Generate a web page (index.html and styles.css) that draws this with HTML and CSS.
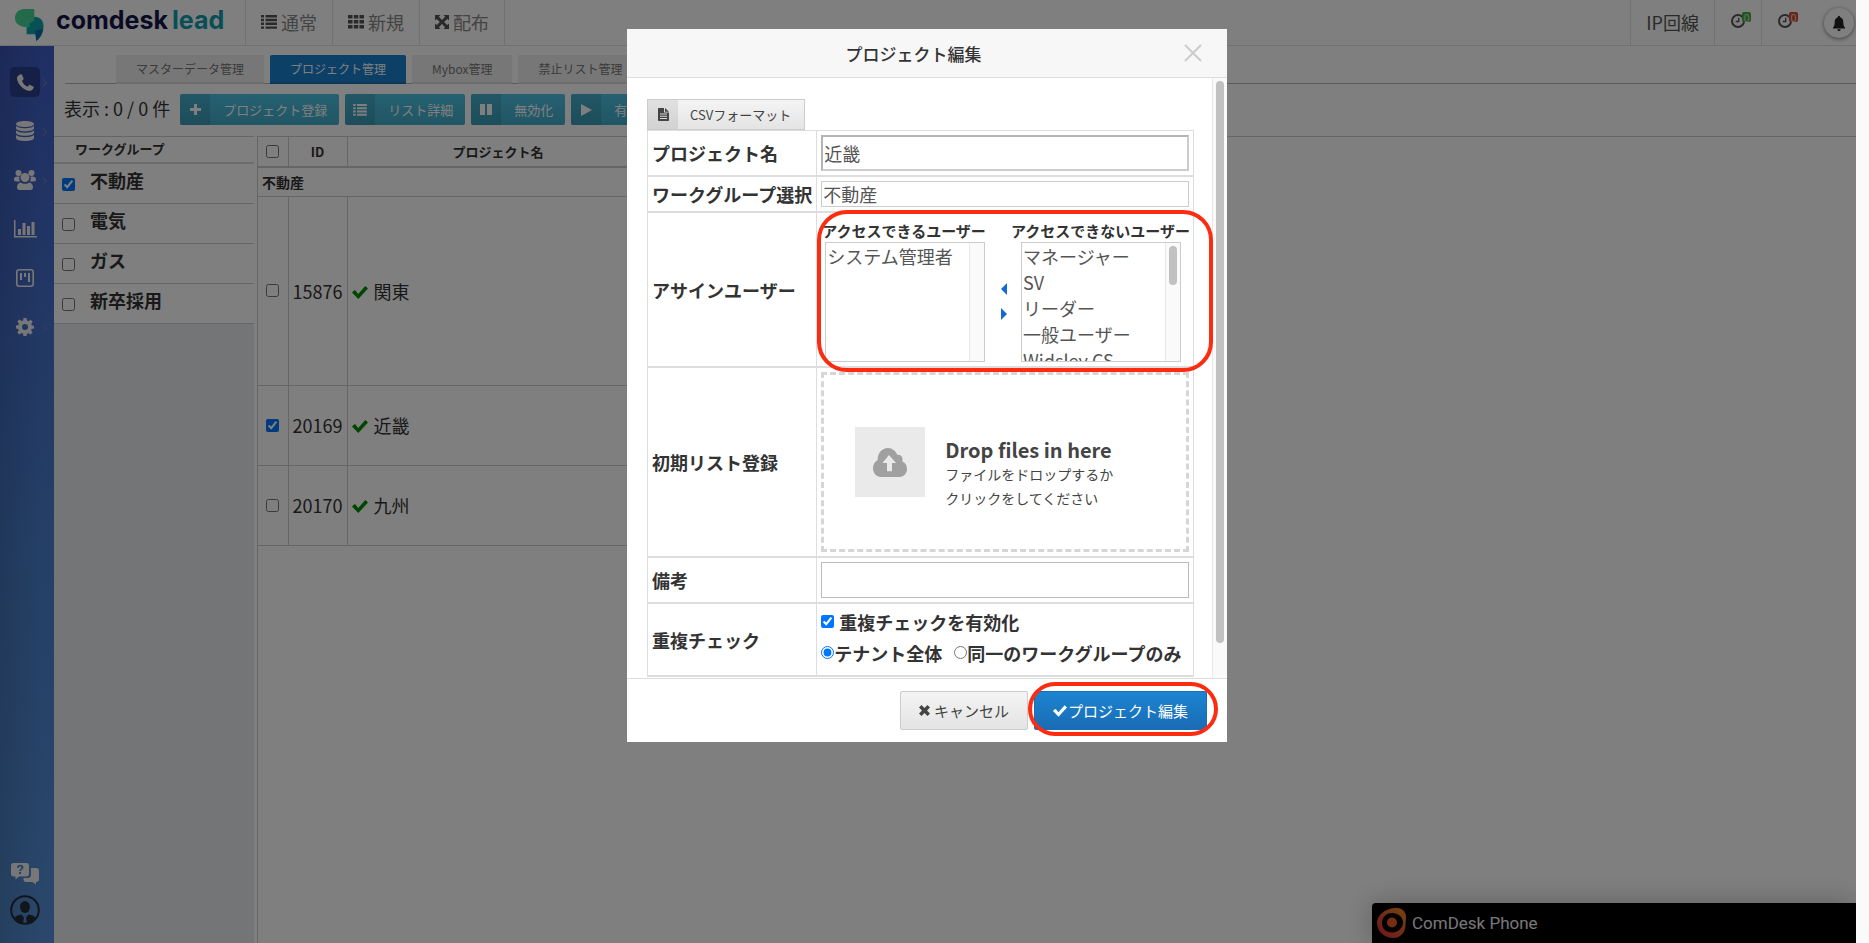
FILE: index.html
```html
<!DOCTYPE html>
<html lang="ja">
<head>
  <meta charset="UTF-8">
  <meta name="viewport" content="width=device-width, initial-scale=1">
  <title>プロジェクト管理 | comdesk lead</title>
  <link rel="stylesheet" href="styles.css">
</head>
<body>

<!-- アイコン定義 -->
<svg class="defs" width="0" height="0" aria-hidden="true">
  <symbol id="i-list" viewBox="0 0 16 14"><path d="M0 0h3v2.4H0zM4.500 0H16v2.400H4.500zM0 3.800h3v2.400H0zM4.500 3.800H16v2.400H4.500zM0 7.600h3V10H0zM4.500 7.600H16V10H4.500zM0 11.400h3v2.400H0zM4.500 11.400H16v2.400H4.500z"/></symbol>
  <symbol id="i-grid" viewBox="0 0 16 14"><path d="M0 0h4.500v3.600H0zM5.800 0h4.500v3.600H5.800zM11.500 0H16v3.600h-4.500zM0 5h4.500v3.600H0zM5.800 5h4.500v3.600H5.800zM11.500 5H16v3.600h-4.500zM0 10h4.500v3.600H0zM5.800 10h4.500v3.600H5.800zM11.500 10H16v3.600h-4.500z"/></symbol>
  <symbol id="i-expand" viewBox="0 0 14 14"><path d="M0 0h5.500L3.900 1.700 7 4.900l3.100-3.200L8.500 0H14v5.500l-1.700-1.600L9.100 7l3.200 3.100L14 8.500V14H8.500l1.600-1.700L7 9.100l-3.100 3.200L5.500 14H0V8.500l1.700 1.600L4.900 7 1.700 3.900 0 5.500z"/></symbol>
  <symbol id="i-check" viewBox="0 0 16 13"><path d="M1.200 5.200 0 6.600 6.300 13 16 2.600 13.300 0 6.200 7.900 3.100 4.100z"/></symbol>
  <symbol id="i-clock" viewBox="0 0 14 14"><path fill-rule="evenodd" d="M7 0a7 7 0 1 0 0 14A7 7 0 0 0 7 0zm0 2a5 5 0 1 1 0 10A5 5 0 0 1 7 2zm0 1.800v3H4.700v1.400h3.700V3.800z"/></symbol>
</svg>

<div class="app">
  <header class="topbar">
    <a class="brand" href="#" aria-label="comdesk lead">
      <svg class="brand-mark" viewBox="0 0 30 33">
        <path fill="#0fa3a8" d="M20 8c6 0 9.500 4 9.500 9.500 0 7-3 12.500-7.500 15.500-.5-3-.5-5-1-7h-9V17z"/>
        <path fill="#0a6fa8" d="M21 22l8-1c-1 5-3.500 9.500-7 12z"/>
        <path fill="#44d492" d="M10 0h10v10c0 3-3 4-5 4.500V19C5 19 0 15 0 9.500S4 0 10 0z"/>
      </svg>
      <span class="brand-name">comdesk</span><span class="brand-sub">lead</span>
    </a>
    <nav class="topnav">
      <a href="#"><svg class="ico-nav" width="16" height="14"><use href="#i-list"/></svg>通常</a>
      <a href="#"><svg class="ico-nav" width="16" height="14"><use href="#i-grid"/></svg>新規</a>
      <a href="#"><svg class="ico-nav" width="14" height="14"><use href="#i-expand"/></svg>配布</a>
    </nav>
    <div class="topbar-right">
      <a class="line-type" href="#">IP回線</a>
      <a class="alarm" href="#"><svg class="ico-clock"><use href="#i-clock"/></svg><span class="badge green">0</span></a>
      <a class="alarm" href="#"><svg class="ico-clock"><use href="#i-clock"/></svg><span class="badge red">0</span></a>
      <button class="bell" type="button" aria-label="通知">
        <svg width="12" height="15" viewBox="0 0 12 15"><path d="M6 0c.7 0 1.200.5 1.200 1.200C9.300 1.800 10.300 3.500 10.300 6c0 3 .6 4.600 1.700 5.600V12.500H0v-.9C1.100 10.600 1.700 9 1.700 6c0-2.500 1-4.200 3.100-4.800C4.800.5 5.300 0 6 0zM4.300 13.200h3.400C7.600 14.200 7 15 6 15s-1.600-.8-1.700-1.800z"/></svg>
      </button>
    </div>
  </header>

  <aside class="sidebar">
    <a class="side-item more active" href="#" aria-label="電話"><svg width="17" height="17" viewBox="0 0 17 17"><path d="M3.600.2c-2.600.9-4 2.800-3.500 5 1 5 5.600 9.800 10.900 11.500 2.300.6 4.600-.5 5.600-2.800.2-.6.100-1-.4-1.300l-3-1.600c-.5-.3-1-.2-1.300.2l-1.300 1.500C7.900 11.500 6 9.400 5 6.900l1.300-1.400c.3-.4.4-.8.200-1.300L5 .8C4.700.2 4.200 0 3.600.2z"/></svg></a>
    <a class="side-item more" href="#" aria-label="データ"><svg width="18" height="20" viewBox="0 0 18 20"><path d="M9 0c5 0 9 1.300 9 3s-4 3-9 3-9-1.300-9-3 4-3 9-3zM0 5c2 1.500 5 2.200 9 2.200S16 6.500 18 5v2.300c0 1.700-4 3-9 3s-9-1.300-9-3zM0 9.500c2 1.500 5 2.200 9 2.200s7-.7 9-2.200v2.300c0 1.700-4 3-9 3s-9-1.300-9-3zM0 14c2 1.500 5 2.200 9 2.200s7-.7 9-2.200v3c0 1.700-4 3-9 3s-9-1.300-9-3z"/></svg></a>
    <a class="side-item more" href="#" aria-label="ユーザー"><svg width="22" height="20" viewBox="0 0 22 20"><circle cx="4.500" cy="3" r="3"/><circle cx="17.500" cy="3" r="3"/><path d="M0 9.500C0 7 1.500 6 5.500 6.500a6 6 0 0 0 .5 5H2C.7 11.500 0 10.800 0 9.500zM22 9.500c0-2.500-1.500-3.500-5.500-3a6 6 0 0 1-.5 5h4c1.300 0 2-.7 2-2zM6.500 12.500c2.500 1.700 6.500 1.700 9 0 2.500.5 3.500 2.500 3.500 5 0 1.500-1 2.500-2.500 2.500h-11C4 20 3 19 3 17.500c0-2.500 1-4.500 3.500-5z"/><circle cx="11" cy="7.500" r="4.500"/></svg></a>
    <a class="side-item" href="#" aria-label="統計"><svg width="23" height="18" viewBox="0 0 23 18"><path d="M0 0h1.500v16H23v1.500H0zM4 9h3v6H4zM8.500 3h3v12h-3zM13 6h3v9h-3zM17.500 2h3v13h-3z"/></svg></a>
    <a class="side-item" href="#" aria-label="ボード"><svg width="18" height="18" viewBox="0 0 18 18"><path fill-rule="evenodd" d="M3 0h12a3 3 0 0 1 3 3v12a3 3 0 0 1-3 3H3a3 3 0 0 1-3-3V3a3 3 0 0 1 3-3zm0 1.600C2.200 1.600 1.600 2.200 1.600 3v12c0 .8.600 1.400 1.400 1.400h12c.8 0 1.400-.6 1.400-1.400V3c0-.8-.6-1.400-1.400-1.400zM4 4h2v7H4zM8 4h2v4H8zM12 4h2v9h-2z"/></svg></a>
    <a class="side-item more" href="#" aria-label="設定"><svg width="18" height="18" viewBox="0 0 18 18"><path fill-rule="evenodd" d="M7.500 0h3l.5 2.500 1.600.7L14.700 1.700l2 2-1.400 2.200.6 1.500L18 7.700v2.900l-2.300.4-.6 1.500 1.500 2.100-2 2-2.200-1.400-1.500.6-.4 2.200H7.500L7 15.700l-1.500-.6-2.200 1.500-2-2 1.500-2.200-.6-1.500L0 10.400V7.600L2.300 7.200l.6-1.500L1.400 3.600l2-2 2.200 1.500L7.100 2.500zM9 6a3 3 0 1 0 0 6 3 3 0 0 0 0-6z"/></svg></a>
    <div class="side-bottom">
      <a class="side-help" href="#" aria-label="ヘルプ"><svg width="28" height="22" viewBox="0 0 28 22"><path d="M20 5h5.500C27 5 28 6 28 7.500v9c0 1.500-1 2.500-2.500 2.500H25v2.500L21.500 19H15c-1.500 0-2.500-1-2.500-2.500V15H17c2 0 3-1.500 3-3z"/><path fill-rule="evenodd" d="M2.500 0h13C17 0 18 1 18 2.500V11c0 1.500-1 2.500-2.500 2.500H8L4.500 16.500v-3h-2C1 13.500 0 12.500 0 11V2.500C0 1 1 0 2.500 0zM6 4.700h2c0-1 .5-1.300 1.200-1.300.8 0 1.200.4 1.200 1 0 1.200-2.200 1.300-2.200 3.600h1.900c0-1.500 2.400-1.700 2.400-3.800 0-1.500-1.300-2.500-3.200-2.500C7.300 1.700 6 2.800 6 4.700zM8.100 9h2v2h-2z"/></svg></a>
      <a class="side-user" href="#" aria-label="アカウント"><svg width="30" height="30" viewBox="0 0 30 30"><circle cx="15" cy="15" r="13.800" fill="none" stroke="currentColor" stroke-width="2"/><ellipse cx="15" cy="12" rx="5" ry="6"/><path d="M4 24c1-3 4-4 7.500-4.500l2.500 3-1 6C9 28.500 6 26.500 4 24zM26 24c-1-3-4-4-7.500-4.500l-2.500 3 1 6c4 0 7-2 9-4.500z"/></svg></a>
    </div>
  </aside>

  <main class="content">
    <div class="tabs">
      <a class="tab" href="#">マスターデータ管理</a>
      <a class="tab active" href="#">プロジェクト管理</a>
      <a class="tab" href="#">Mybox管理</a>
      <a class="tab" href="#">禁止リスト管理</a>
    </div>

    <div class="toolbar">
      <span class="count">表示 : 0 / 0 件</span>
      <button class="tool-btn" type="button"><span class="tool-ico"><svg width="11" height="11" viewBox="0 0 11 11"><path d="M4 0h3v4h4v3H7v4H4V7H0V4h4z"/></svg></span>プロジェクト登録</button>
      <button class="tool-btn" type="button"><span class="tool-ico"><svg width="14" height="12"><use href="#i-list"/></svg></span>リスト詳細</button>
      <button class="tool-btn" type="button"><span class="tool-ico"><svg width="12" height="11" viewBox="0 0 12 11"><path d="M0 0h5v11H0zM7 0h5v11H7z"/></svg></span>無効化</button>
      <button class="tool-btn" type="button"><span class="tool-ico"><svg width="11" height="12" viewBox="0 0 11 12"><path d="M0 0l11 6-11 6z"/></svg></span>有効化</button>
    </div>

    <div class="panes">
      <section class="groups">
        <h2>ワークグループ</h2>
        <label><input type="checkbox" checked>不動産</label>
        <label><input type="checkbox">電気</label>
        <label><input type="checkbox">ガス</label>
        <label><input type="checkbox">新卒採用</label>
      </section>

      <section class="projects">
        <table class="project-table">
          <thead>
            <tr><th class="col-check"><input type="checkbox" aria-label="すべて選択"></th><th class="col-id">ID</th><th class="col-name">プロジェクト名</th></tr>
          </thead>
          <tbody>
            <tr class="group-row"><th colspan="3">不動産</th></tr>
            <tr class="tall"><td class="col-check"><input type="checkbox" aria-label="関東"></td><td>15876</td><td><svg class="ico-ok"><use href="#i-check"/></svg>関東</td></tr>
            <tr><td class="col-check"><input type="checkbox" aria-label="近畿" checked></td><td>20169</td><td><svg class="ico-ok"><use href="#i-check"/></svg>近畿</td></tr>
            <tr><td class="col-check"><input type="checkbox" aria-label="九州"></td><td>20170</td><td><svg class="ico-ok"><use href="#i-check"/></svg>九州</td></tr>
          </tbody>
        </table>
      </section>
    </div>
  </main>

  <div class="phone">
    <svg width="30" height="30" viewBox="0 0 30 30">
      <defs><linearGradient id="ring" x1="1" y1="0" x2="0" y2="1"><stop offset="0" stop-color="#f08a1c"/><stop offset="1" stop-color="#d8283c"/></linearGradient></defs>
      <path fill="url(#ring)" fill-rule="evenodd" d="M17 0c7-1 12 3 12 9 0 3-.5 5-.5 8 0 7-5 13-12 13C8 30 0 24 0 15 0 7 8 1 17 0zm-2 5C9 5 5 9.500 5 15s4 9.500 10 9.500S26 20 26 14.500 21 5 15 5z"/>
      <circle cx="15" cy="14.500" r="5" fill="#ec5a28"/>
    </svg>
    <span>ComDesk Phone</span>
  </div>
</div>

<div class="overlay">
  <div class="modal" role="dialog" aria-labelledby="modalTitle">
    <div class="modal-header">
      <h1 id="modalTitle">プロジェクト編集</h1>
      <button class="close" type="button" aria-label="閉じる"><svg width="18" height="18" viewBox="0 0 18 18"><path d="M1 1l16 16M17 1L1 17"/></svg></button>
    </div>

    <div class="modal-scroll">
      <div class="modal-body">
        <button class="csv-btn" type="button"><span class="csv-ico"><svg width="11" height="13" viewBox="0 0 11 13"><path fill-rule="evenodd" d="M1 0h5v4.500h5V12c0 .600-.4 1-1 1H1c-.6 0-1-.4-1-1V1c0-.6.4-1 1-1zm6 0l4 3.700H7zM2 5.500v1h7v-1zm0 2.200v1h7v-1zm0 2.200v1h7v-1z"/></svg></span>CSVフォーマット</button>

        <table class="form-table">
          <tr>
            <th><label for="projectName">プロジェクト名</label></th>
            <td><input class="text-input focused" id="projectName" type="text" value="近畿"></td>
          </tr>
          <tr>
            <th><label for="workGroup">ワークグループ選択</label></th>
            <td><select class="group-select" id="workGroup"><option>不動産</option></select></td>
          </tr>
          <tr>
            <th>アサインユーザー</th>
            <td class="assign-cell">
              <div class="assign">
                <div class="assign-col">
                  <label for="allowed">アクセスできるユーザー</label>
                  <div class="list-box">
                    <select id="allowed" multiple>
                      <option>システム管理者</option>
                    </select>
                    <div class="track"></div>
                  </div>
                </div>
                <div class="assign-arrows">
                  <button type="button" aria-label="追加"><svg width="6" height="12" viewBox="0 0 6 12"><path d="M6 0v12L0 6z"/></svg></button>
                  <button type="button" aria-label="削除"><svg width="6" height="12" viewBox="0 0 6 12"><path d="M0 0v12l6-6z"/></svg></button>
                </div>
                <div class="assign-col denied">
                  <label for="denied">アクセスできないユーザー</label>
                  <div class="list-box">
                    <select id="denied" multiple>
                      <option>マネージャー</option>
                      <option>SV</option>
                      <option>リーダー</option>
                      <option>一般ユーザー</option>
                      <option>Widsley CS</option>
                    </select>
                    <div class="track"><div class="thumb thumb-list"></div></div>
                  </div>
                </div>
              </div>
              <div class="mark mark-assign"></div>
            </td>
          </tr>
          <tr>
            <th>初期リスト登録</th>
            <td>
              <div class="dropzone">
                <div class="drop-ico"><svg width="34" height="29" viewBox="0 0 34 25" preserveAspectRatio="none"><path fill-rule="evenodd" d="M8 25c-4.500 0-8-3.300-8-7.500 0-3.200 1.800-5.800 4.600-7C4.500 4.500 9 0 15 0c4.300 0 7.800 2.500 9.300 6 3.700-.7 6.200 2.400 5 5.700 2.900.8 4.700 3.200 4.700 6.200 0 4-3.200 7.100-7.200 7.100zM16 6l-6.500 7H14v7h5v-7h4z"/></svg></div>
                <div class="drop-text">
                  <strong>Drop files in here</strong>
                  <span>ファイルをドロップするか<br>クリックをしてください</span>
                </div>
              </div>
            </td>
          </tr>
          <tr>
            <th><label for="note">備考</label></th>
            <td><input class="text-input" id="note" type="text"></td>
          </tr>
          <tr>
            <th>重複チェック</th>
            <td class="dup">
              <div class="dup-row"><label class="spaced"><input type="checkbox" checked>重複チェックを有効化</label></div>
              <div class="dup-row"><label><input type="radio" name="scope" checked>テナント全体</label><label><input type="radio" name="scope">同一のワークグループのみ</label></div>
            </td>
          </tr>
        </table>
      </div>
      <div class="track"><div class="thumb thumb-modal"></div></div>
    </div>

    <div class="modal-footer">
      <button class="btn" type="button"><svg width="11" height="11" viewBox="0 0 11 11"><path d="M2.500 0L5.500 3l3-3L11 2.500l-3 3 3 3L8.500 11l-3-3-3 3L0 8.500l3-3-3-3z"/></svg>キャンセル</button>
      <div class="submit-wrap">
        <button class="btn primary" type="button"><svg width="14" height="12"><use href="#i-check"/></svg>プロジェクト編集</button>
        <div class="mark mark-submit"></div>
      </div>
    </div>
  </div>
</div>

</body>
</html>
```

FILE: styles.css
```css
* {
  box-sizing: border-box;
}

body {
  font-family: "Noto Sans CJK JP", "Noto Sans", sans-serif;
  font-size: 18px;
  color: #333;
  background-color: #fafafa;
  margin: 0;
  overflow: hidden;
}

a {
  color: inherit;
  text-decoration: none;
}

button, input, select {
  font-family: inherit;
}

svg {
  fill: currentColor;
  flex: none;
}

.defs {
  position: absolute;
}

input[type="checkbox"], input[type="radio"] {
  width: 13px;
  height: 13px;
  margin: 0;
  flex: none;
}

.app {
  display: grid;
  grid-template: 46px 1fr / 54px 1fr;
  height: 100vh;
  margin-right: 13px;
  background-color: #fff;
  position: relative;
  overflow: hidden;
}

/* ヘッダー */
.topbar {
  grid-column: 1 / 3;
  display: flex;
  border-bottom: 1px solid #e0e0e0;
}

.brand {
  display: flex;
  align-items: flex-start;
  width: 246px;
  padding-left: 15px;
  border-right: 1px solid #e4e4e4;
  font-family: Inter, sans-serif;
  font-size: 25px;
  font-weight: 700;
  line-height: 40px;
}

.brand-mark {
  width: 29px;
  height: 32px;
  margin: 9px 12px 0 0;
}

.brand-name {
  color: #15154a;
}

.brand-sub {
  color: #0e9cae;
  margin-left: 4px;
}

.topnav {
  display: flex;
}

.topnav a {
  display: flex;
  align-items: center;
  padding: 0 15px 2px;
  border-right: 1px solid #e4e4e4;
  color: #888;
}

.ico-nav {
  margin-right: 4px;
  color: #555;
}

.topbar-right {
  display: flex;
  margin-left: auto;
  color: #555;
}

.line-type, .alarm {
  display: flex;
  align-items: center;
  border-left: 1px solid #e4e4e4;
}

.line-type {
  padding: 0 15px 2px;
}

.alarm {
  position: relative;
  width: 47px;
  padding: 0 0 3px 16px;
}

.ico-clock {
  width: 14px;
  height: 14px;
}

.badge {
  position: absolute;
  left: 27px;
  top: 12px;
  width: 9px;
  height: 10px;
  border-radius: 2px;
  color: #ddd;
  font-size: 11px;
  line-height: 10px;
  text-align: center;
}

.badge.green {
  background-color: #3fae3f;
}

.badge.red {
  background-color: #d9482f;
}

.bell {
  display: flex;
  align-items: center;
  justify-content: center;
  width: 30px;
  height: 30px;
  margin: 8px 2px 0 16px;
  padding: 0;
  border: none;
  border-radius: 50%;
  background-color: #fff;
  box-shadow: 0 1px 4px rgba(0,0,0,0.5);
  color: #222;
}

/* サイドバー */
.sidebar {
  display: flex;
  flex-direction: column;
  align-items: center;
  padding: 21px 4px 18px 0;
  background: linear-gradient(90deg, rgba(0,0,0,0.12), rgba(0,0,0,0) 80%), linear-gradient(#3f5ec8, #4a7fcc 55%, #5590d8);
  color: #eee;
}

.side-item {
  position: relative;
  display: flex;
  align-items: center;
  justify-content: center;
  width: 30px;
  height: 30px;
  margin-bottom: 19px;
  border-radius: 5px;
}

.side-item.active {
  background-color: #2c3f8a;
}

.side-item.more::after {
  content: "";
  position: absolute;
  right: -6px;
  top: 13px;
  width: 5px;
  height: 5px;
  border: solid #6a7cb4;
  border-width: 1px 1px 0 0;
  transform: rotate(45deg);
}

.side-bottom {
  margin-top: auto;
  display: flex;
  flex-direction: column;
  align-items: center;
  gap: 10px;
}

.side-help, .side-user {
  display: flex;
}

.side-user {
  color: #222c38;
}

/* コンテンツ */
.content {
  display: flex;
  flex-direction: column;
  min-width: 0;
}

.tabs {
  display: flex;
  gap: 6px;
  margin-left: 11px;
  padding: 9px 0 0 51px;
  box-shadow: inset 0 -1px #b8b8b8;
}

.tab {
  padding: 0 20px;
  background-color: #eee;
  border-bottom: 2px solid #ddd;
  font-size: 12px;
  line-height: 27px;
  color: #777;
}

.tab.active {
  background-color: #1a80cf;
  border-color: #1a6cae;
  border-radius: 2px 2px 0 0;
  color: #fff;
}

.toolbar {
  display: flex;
  align-items: center;
  gap: 6px;
  padding: 10px 0 11px 10px;
}

.count {
  margin-right: 4px;
  padding-bottom: 4px;
}

.tool-btn {
  display: flex;
  align-items: center;
  height: 31px;
  padding: 0 12px 0 0;
  border: none;
  border-radius: 2px;
  background: linear-gradient(#4cc2e2, #42abc9);
  color: #fff;
  font-size: 13px;
}

.tool-ico {
  display: flex;
  align-items: center;
  justify-content: center;
  width: 30px;
  height: 31px;
  margin-right: 13px;
  background-color: rgba(0,0,0,0.1);
}

.panes {
  display: flex;
  flex: 1;
}

.groups {
  width: 200px;
  background-color: #e6eaed;
  border-top: 1px solid #ccc;
}

.groups h2 {
  margin: 0;
  padding: 0 0 2px 21px;
  border-bottom: 2px solid #d8d8d8;
  background-color: #fff;
  font-size: 13px;
  line-height: 23px;
}

.groups label {
  display: flex;
  align-items: center;
  height: 40px;
  padding: 0 8px 7px;
  border-bottom: 1px solid #ccc;
  background-color: #fff;
  font-weight: 700;
}

.groups input {
  margin: 8px 15px 0 0;
}

.projects {
  flex: 1;
  margin-left: 3px;
  border-top: 1px solid #ccc;
  border-left: 1px solid #ccc;
}

.project-table {
  border-collapse: collapse;
}

.project-table th, .project-table td {
  padding: 0 4px;
  border: 1px solid #ccc;
  text-align: left;
}

.project-table tr > :first-child {
  border-left: none;
}

.project-table thead th {
  height: 30px;
  border-top: none;
  border-bottom: 2px solid #ccc;
  font-size: 13px;
  text-align: center;
}

.project-table .col-check {
  width: 30px;
  text-align: center;
}

.col-check input {
  display: block;
  margin: 0 auto;
}

.col-id {
  width: 59px;
}

.col-name {
  width: 302px;
}

.project-table .group-row th {
  height: 29px;
  font-size: 14px;
}

.project-table td {
  height: 80px;
}

.project-table .tall td {
  height: 189px;
}

.ico-ok {
  width: 16px;
  height: 13px;
  margin-right: 6px;
  color: #008a00;
}

/* 電話ウィジェット */
.phone {
  position: absolute;
  right: 0;
  bottom: 0;
  display: flex;
  align-items: center;
  gap: 5px;
  width: 484px;
  height: 40px;
  padding-left: 5px;
  border-radius: 4px 0 0 0;
  background-color: #000;
  box-shadow: 0 0 28px rgba(0,0,0,0.25);
  color: #eee;
  font-family: Roboto, sans-serif;
  font-size: 17px;
}

/* モーダル */
.overlay {
  position: fixed;
  inset: 0 13px 0 0;
  padding-right: 2px;
  background-color: rgba(0,0,0,0.5);
}

.modal {
  width: 600px;
  margin: 29px auto 0;
  background-color: #fff;
}

.modal-header {
  display: flex;
  align-items: center;
  height: 49px;
  padding: 0 25px 0 16px;
  border-bottom: 1px solid #ddd;
  background-color: #f7f7f7;
}

.modal-header h1 {
  flex: 1;
  margin: 0;
  font-size: 17px;
  font-weight: 500;
  text-align: center;
}

.close {
  display: flex;
  padding: 0;
  border: none;
  background: none;
}

.close path {
  stroke: #ccc;
  stroke-width: 2;
}

.modal-scroll {
  display: flex;
  height: 600px;
  overflow: hidden;
}

.modal-body {
  flex: 1;
  padding: 21px 18px 0 20px;
}

.track {
  width: 15px;
  padding: 3px 3px 0;
  border-left: 1px solid #e8e8e8;
  background-color: #fafafa;
}

.thumb {
  width: 8px;
  border-radius: 4px;
  background-color: #c1c1c1;
}

.thumb-modal {
  height: 562px;
}

.thumb-list {
  height: 39px;
}

.csv-btn {
  display: flex;
  align-items: center;
  height: 31px;
  padding: 0 13px 0 0;
  border: 1px solid #ccc;
  background: linear-gradient(#f4f4f4, #e4e4e4);
  color: #444;
  font-size: 13px;
}

.csv-ico {
  display: flex;
  align-items: center;
  justify-content: center;
  width: 30px;
  height: 29px;
  margin-right: 12px;
  background-color: rgba(0,0,0,0.08);
}

.form-table {
  width: 100%;
  border: 1px solid #ddd;
  border-collapse: collapse;
}

.form-table th, .form-table td {
  padding: 4px;
  border: 1px solid #ddd;
  border-bottom-width: 2px;
}

.form-table th {
  width: 169px;
  text-align: left;
  white-space: nowrap;
}

.text-input {
  display: block;
  width: 100%;
  height: 36px;
  padding: 0 2px;
  border: 1px solid #bbb;
  color: #555;
  font-size: 18px;
}

.text-input.focused {
  border-width: 2px;
  border-color: #b4b4b4 #ccc #ccc #b4b4b4;
  padding: 0 1px;
}

.group-select {
  display: block;
  appearance: none;
  width: 100%;
  height: 26px;
  padding: 0 1px;
  border: 1px solid #ccc;
  background-color: #fff;
  color: #555;
  font-size: 18px;
  line-height: 24px;
}

.form-table .assign-cell {
  position: relative;
  padding: 6px 0 4px 5px;
}

.assign {
  display: flex;
  justify-content: space-between;
  padding-right: 3px;
}

.assign-col label {
  display: block;
  font-size: 15px;
  font-weight: 700;
  line-height: 23px;
}

.list-box {
  display: flex;
  width: 160px;
  height: 120px;
  margin-left: 3px;
  border: 1px solid #ccc;
}

.denied .list-box {
  margin-left: 10px;
}

.list-box select {
  flex: 1;
  min-width: 0;
  padding: 0;
  border: none;
  background-color: #fff;
  color: #555;
  font-size: 18px;
}

.list-box option {
  height: 26px;
  padding: 0 1px;
  line-height: 26px;
}

.assign-arrows {
  display: flex;
  flex-direction: column;
  gap: 13px;
  padding: 64px 0 0 11px;
}

.assign-arrows button {
  display: flex;
  padding: 0;
  border: none;
  background: none;
  color: #1769d2;
}

.dropzone {
  display: flex;
  align-items: center;
  gap: 20px;
  height: 180px;
  padding-left: 31px;
  border: 3px dashed #d6d6d6;
}

.drop-ico {
  display: flex;
  align-items: center;
  justify-content: center;
  width: 70px;
  height: 70px;
  background-color: #eaeaea;
  color: #a0a0a0;
}

.drop-text {
  padding-top: 24px;
  color: #444;
  font-size: 14px;
  line-height: 24px;
}

.drop-text strong {
  display: block;
  font-size: 20px;
}

.form-table .dup {
  padding: 2px 4px 7px;
}

.dup-row {
  display: flex;
  align-items: center;
  gap: 12px;
  height: 31px;
  font-weight: 700;
  white-space: nowrap;
}

.dup-row label {
  display: flex;
  align-items: center;
}

.dup-row .spaced {
  gap: 5px;
}

.modal-footer {
  display: flex;
  align-items: center;
  justify-content: flex-end;
  gap: 6px;
  height: 64px;
  padding: 0 20px;
  border-top: 1px solid #ddd;
}

.btn {
  display: flex;
  align-items: center;
  gap: 4px;
  height: 39px;
  padding: 0 18px;
  border: 1px solid #ccc;
  border-radius: 2px;
  background: linear-gradient(#f4f4f4, #e4e4e4);
  color: #444;
  font-size: 15px;
}

.btn.primary {
  gap: 1px;
  border-color: #1a6cb4;
  background: linear-gradient(#1b84d2, #1a6cb4);
  color: #fff;
}

.submit-wrap {
  position: relative;
}

/* 赤枠の強調 */
.mark {
  position: absolute;
  border: 4px solid #fb2c10;
  pointer-events: none;
}

.mark-assign {
  inset: -3px -20px -6px 0;
  border-radius: 30px;
}

.mark-submit {
  inset: -9px -11px -6px -6px;
  border-radius: 27px;
}
```
